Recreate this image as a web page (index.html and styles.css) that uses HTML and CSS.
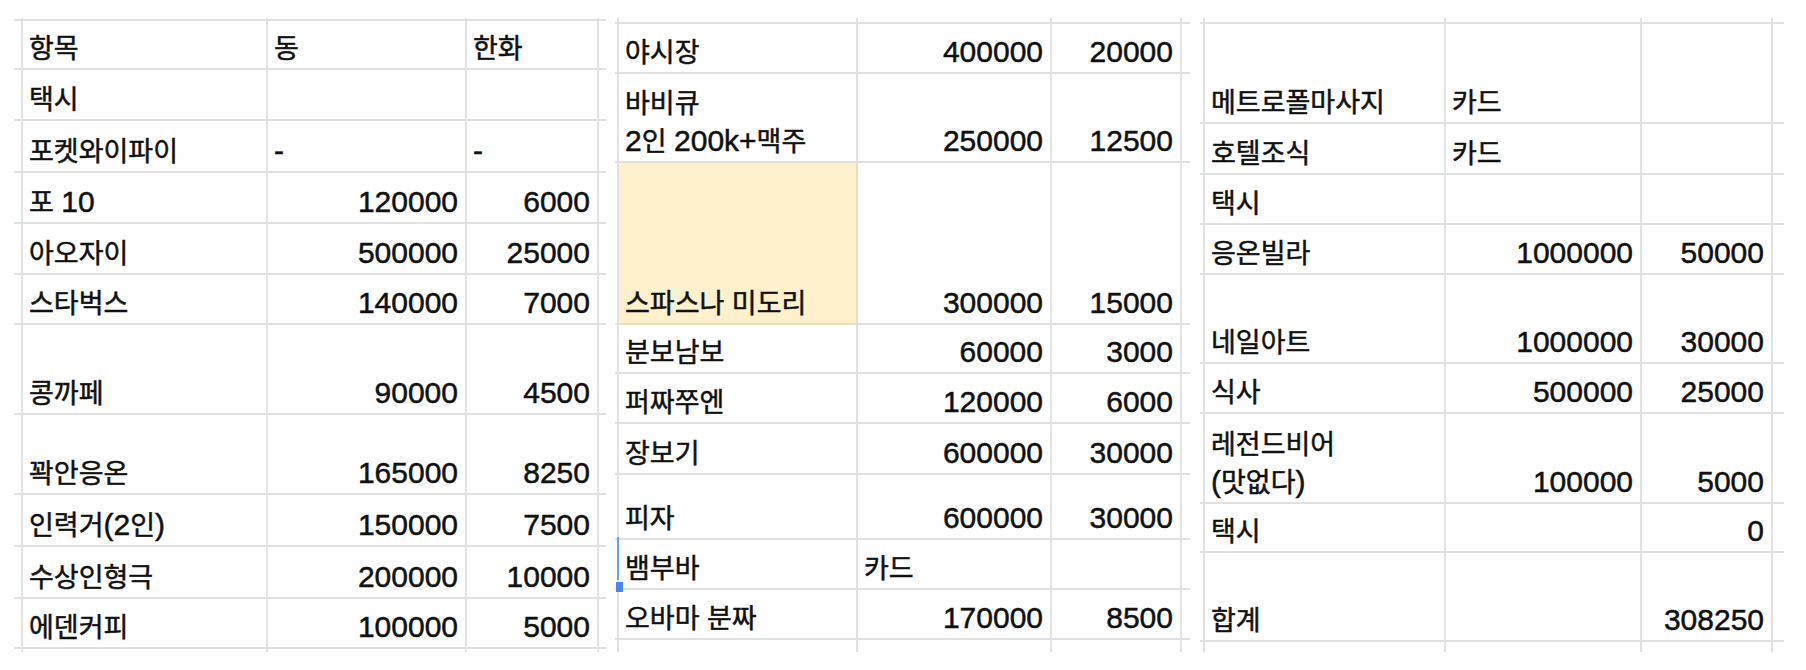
FILE: index.html
```html
<!DOCTYPE html>
<html lang="ko">
<head>
<meta charset="utf-8">
<title>경비</title>
<link rel="stylesheet" href="styles.css">
</head>
<body>
<div class="wrap">
  <div class="sheet p1">
    <div class="c"></div><div class="c"></div><div class="c"></div><div class="c"></div><div class="c e"></div>

    <div class="c"></div><div class="c lab"><span>항목</span></div><div class="c lab"><span>동</span></div><div class="c lab"><span>한화</span></div><div class="c e"></div>
    <div class="c"></div><div class="c lab"><span>택시</span></div><div class="c"></div><div class="c"></div><div class="c e"></div>
    <div class="c"></div><div class="c lab"><span>포켓와이파이</span></div><div class="c lab"><span><span class="n">-</span></span></div><div class="c lab"><span><span class="n">-</span></span></div><div class="c e"></div>
    <div class="c"></div><div class="c lab"><span>포 <span class="n">10</span></span></div><div class="c num">120000</div><div class="c num">6000</div><div class="c e"></div>
    <div class="c"></div><div class="c lab"><span>아오자이</span></div><div class="c num">500000</div><div class="c num">25000</div><div class="c e"></div>
    <div class="c"></div><div class="c lab"><span>스타벅스</span></div><div class="c num">140000</div><div class="c num">7000</div><div class="c e"></div>
    <div class="c"></div><div class="c lab"><span>콩까페</span></div><div class="c num">90000</div><div class="c num">4500</div><div class="c e"></div>
    <div class="c"></div><div class="c lab"><span>꽉안응온</span></div><div class="c num">165000</div><div class="c num">8250</div><div class="c e"></div>
    <div class="c"></div><div class="c lab"><span>인력거<span class="n">(2</span>인<span class="n">)</span></span></div><div class="c num">150000</div><div class="c num">7500</div><div class="c e"></div>
    <div class="c"></div><div class="c lab"><span>수상인형극</span></div><div class="c num">200000</div><div class="c num">10000</div><div class="c e"></div>
    <div class="c"></div><div class="c lab"><span>에덴커피</span></div><div class="c num">100000</div><div class="c num">5000</div><div class="c e"></div>

    <div class="c b"></div><div class="c b"></div><div class="c b"></div><div class="c b"></div><div class="c b e"></div>
  </div>

  <div class="sheet p2">
    <div class="c"></div><div class="c"></div><div class="c"></div><div class="c"></div><div class="c e"></div>

    <div class="c"></div><div class="c lab"><span>야시장</span></div><div class="c num">400000</div><div class="c num">20000</div><div class="c e"></div>
    <div class="c"></div><div class="c lab"><span>바비큐<br><span class="n">2</span>인 <span class="n">200k+</span>맥주</span></div><div class="c num">250000</div><div class="c num">12500</div><div class="c e"></div>
    <div class="c"></div><div class="c lab hl"><span>스파스나 미도리</span></div><div class="c num">300000</div><div class="c num">15000</div><div class="c e"></div>
    <div class="c"></div><div class="c lab"><span>분보남보</span></div><div class="c num">60000</div><div class="c num">3000</div><div class="c e"></div>
    <div class="c"></div><div class="c lab"><span>퍼짜쭈엔</span></div><div class="c num">120000</div><div class="c num">6000</div><div class="c e"></div>
    <div class="c"></div><div class="c lab"><span>장보기</span></div><div class="c num">600000</div><div class="c num">30000</div><div class="c e"></div>
    <div class="c"></div><div class="c lab"><span>피자</span></div><div class="c num">600000</div><div class="c num">30000</div><div class="c e"></div>
    <div class="c"></div><div class="c lab"><span>뱀부바</span></div><div class="c lab"><span>카드</span></div><div class="c"></div><div class="c e"></div>
    <div class="c"></div><div class="c lab"><span>오바마 분짜</span></div><div class="c num">170000</div><div class="c num">8500</div><div class="c e"></div>

    <div class="c b"></div><div class="c b"></div><div class="c b"></div><div class="c b"></div><div class="c b e"></div>

    <div class="sel-line"></div>
    <div class="sel-handle"></div>
  </div>

  <div class="sheet p3">
    <div class="c"></div><div class="c"></div><div class="c"></div><div class="c"></div><div class="c e"></div>

    <div class="c"></div><div class="c lab"><span>메트로폴마사지</span></div><div class="c lab"><span>카드</span></div><div class="c"></div><div class="c e"></div>
    <div class="c"></div><div class="c lab"><span>호텔조식</span></div><div class="c lab"><span>카드</span></div><div class="c"></div><div class="c e"></div>
    <div class="c"></div><div class="c lab"><span>택시</span></div><div class="c"></div><div class="c"></div><div class="c e"></div>
    <div class="c"></div><div class="c lab"><span>응온빌라</span></div><div class="c num">1000000</div><div class="c num">50000</div><div class="c e"></div>
    <div class="c"></div><div class="c lab"><span>네일아트</span></div><div class="c num">1000000</div><div class="c num">30000</div><div class="c e"></div>
    <div class="c"></div><div class="c lab"><span>식사</span></div><div class="c num">500000</div><div class="c num">25000</div><div class="c e"></div>
    <div class="c"></div><div class="c lab"><span>레전드비어<br><span class="n">(</span>맛없다<span class="n">)</span></span></div><div class="c num">100000</div><div class="c num">5000</div><div class="c e"></div>
    <div class="c"></div><div class="c lab"><span>택시</span></div><div class="c"></div><div class="c num">0</div><div class="c e"></div>
    <div class="c"></div><div class="c lab"><span>합계</span></div><div class="c"></div><div class="c num">308250</div><div class="c e"></div>

    <div class="c b"></div><div class="c b"></div><div class="c b"></div><div class="c b"></div><div class="c b e"></div>
  </div>
</div>
</body>
</html>
```

FILE: styles.css
```css
html, body {
  margin: 0;
  padding: 0;
  background: #ffffff;
}

.wrap {
  display: flex;
  align-items: flex-start;
  padding: 18px 0 0 14px;
  gap: 9px;
  color: #111111;
}

.sheet {
  display: grid;
}

.p1 {
  grid-template-columns: 9px 245px 199px 132px 7px;
  grid-template-rows: 3px 49px 51px 52px 51px 51px 50px 90px 80px 52px 52px 50px 3px;
}

.p2 {
  position: relative;
  grid-template-columns: 4px 239px 194px 130px 8px;
  grid-template-rows: 6px 50px 89px 162px 49px 50px 51px 65px 50px 50px 12px;
}

.p3 {
  margin-left: 1px;
  grid-template-columns: 5px 241px 196px 131px 11px;
  grid-template-rows: 6px 100px 51px 50px 50px 89px 50px 90px 49px 89px 10px;
}

.c {
  box-sizing: border-box;
  border-right: 2px solid #e1e1e1;
  border-bottom: 2px solid #e1e1e1;
  display: flex;
  align-items: flex-end;
  min-width: 0;
  overflow: hidden;
  white-space: nowrap;
}

.c.e {
  border-right: none;
}

.c.b {
  border-bottom: none;
}

.lab {
  font-family: "Liberation Sans", "Noto Sans CJK KR", sans-serif;
  font-size: 27px;
  line-height: 38px;
  padding: 0 0 0 6px;
  -webkit-text-stroke: 0.5px currentColor;
}

.lab .n {
  font-size: 30px;
  line-height: 1;
}

.num {
  justify-content: flex-end;
  font-family: "Liberation Sans", Arial, sans-serif;
  font-size: 30px;
  line-height: 34px;
  padding: 0 7px 3px 0;
  -webkit-text-stroke: 0.5px currentColor;
}

.hl {
  background: #fcf0cd;
  border-right-color: #ecdfb8;
  border-bottom-color: #ecdfb8;
}

.sel-line {
  position: absolute;
  left: 2px;
  top: 519px;
  width: 2px;
  height: 43px;
  background: #6d9cf3;
}

.sel-handle {
  position: absolute;
  left: 1px;
  top: 564px;
  width: 7px;
  height: 10px;
  background: #4a86ee;
}
```
